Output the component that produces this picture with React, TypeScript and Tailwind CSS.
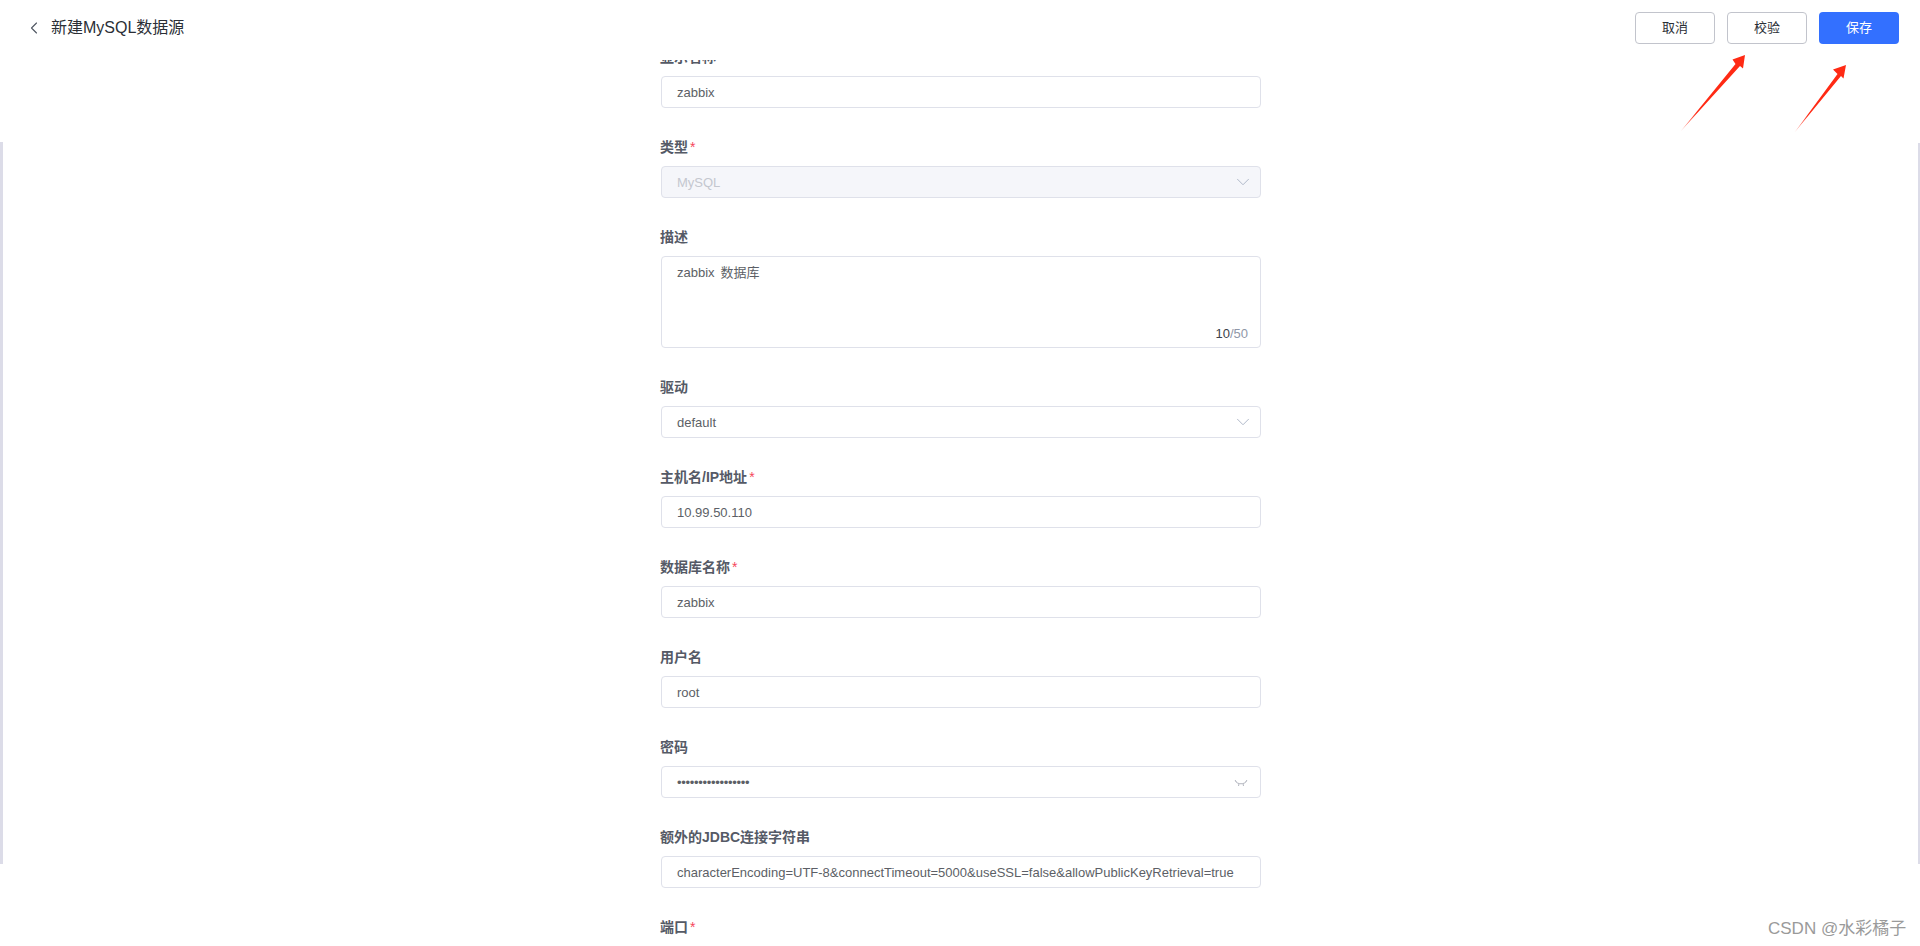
import React from 'react';
import { ChevronDown, ChevronLeft } from 'lucide-react';

const fontStack = "font-['Liberation_Sans','Noto_Sans_CJK_SC',sans-serif]";

function Label({ text, required }: { text: string; required?: boolean }) {
  return (
    <div className="mb-[10px] ml-[-1px] flex h-5 items-center pt-[2px] text-[14px] font-semibold leading-5 text-[#555a66]">
      {text}
      {required && <span className="ml-[2px] font-normal text-[#f5475b]">*</span>}
    </div>
  );
}

function Field({ label, required, value, disabled, suffix }: {
  label: string;
  required?: boolean;
  value: React.ReactNode;
  disabled?: boolean;
  suffix?: React.ReactNode;
}) {
  return (
    <div className="mb-[28px]">
      <Label text={label} required={required} />
      <div
        className={`flex h-8 items-center justify-between rounded border border-[#dfe1ea] pl-[15px] pr-[6px] text-[13px] ${
          disabled ? 'bg-[#f5f6fa] text-[#c4c7cf]' : 'bg-white text-[#5c5f66]'
        }`}
      >
        <span className="pt-[2px]">{value}</span>
        {suffix}
      </div>
    </div>
  );
}

function EyeClosed() {
  return (
    <svg width="14" height="8" viewBox="0 0 14 8" fill="none" stroke="#b4b7c0" strokeWidth="1" className="mr-[6px] mt-[2px]">
      <path d="M1.5 2.5C4 5.5 10 5.5 12.5 2.500" />
      <path d="M1 1l1.5 2M13 1l-1.500 2M5 4.500L4.500 7M9 4.500L9.500 7" />
    </svg>
  );
}

const select = <ChevronDown className="h-[22px] w-[22px] text-[#a9b2c4]" strokeWidth={1} />;

export default function App() {
  return (
    <div className={`relative flex h-[946px] flex-col overflow-hidden bg-white ${fontStack}`}>
      <header className="flex h-[60px] shrink-0 items-start justify-between pl-[24px] pr-[21px] pt-3">
        <div className="flex h-8 items-center text-[16px] text-[#2b2f36]">
          <ChevronLeft className="mr-[7px] h-5 w-5 text-[#4f5662]" strokeWidth={1.3} />
          新建MySQL数据源
        </div>
        <div className="flex gap-3 text-[13px]">
          <button className="h-8 w-20 rounded border border-[#c2c4cc] bg-white text-[#2b2f36]">取消</button>
          <button className="h-8 w-20 rounded border border-[#c2c4cc] bg-white text-[#2b2f36]">校验</button>
          <button className="h-8 w-20 rounded bg-[#3370ff] text-white">保存</button>
        </div>
      </header>

      <main className="min-h-0 flex-1 overflow-hidden">
        <form className="mx-auto mt-[-14px] w-[600px] translate-x-[1px]">
          <Field label="显示名称" value="zabbix" />
          <Field label="类型" required value="MySQL" disabled suffix={select} />

          <div className="mb-[28px]">
            <Label text="描述" />
            <div className="relative h-[92px] rounded border border-[#dfe1ea] pl-[15px] pr-[15px] pt-[6px] text-[13px] leading-5 text-[#5c5f66]">
              zabbix<span className="ml-[6px]">数据库</span>
              <span className="absolute bottom-[3px] right-[12px] text-[13px] text-[#8f97a8]">
                <span className="text-[#3a3f4a]">10</span>/50
              </span>
            </div>
          </div>

          <Field label="驱动" value="default" suffix={select} />
          <Field label="主机名/IP地址" required value="10.99.50.110" />
          <Field label="数据库名称" required value="zabbix" />
          <Field label="用户名" value="root" />
          <Field label="密码" value={<span className="tracking-[-0.3px]">•••••••••••••••••</span>} suffix={<EyeClosed />} />
          <Field label="额外的JDBC连接字符串" value="characterEncoding=UTF-8&connectTimeout=5000&useSSL=false&allowPublicKeyRetrieval=true" />
          <Label text="端口" required />
        </form>
      </main>

      {/* edges left over from the captured page */}
      <div className="absolute left-0 top-[142px] h-[722px] w-[3px] bg-[#dcdce8]" />
      <div className="absolute right-0 top-[143px] h-[721px] w-[2px] bg-[#dcdce8]" />

      {/* annotation arrows */}
      <svg className="absolute left-[1670px] top-[50px]" width="190" height="90" viewBox="1670 50 190 90">
        <defs>
          <linearGradient id="a1" x1="1681" y1="131" x2="1745" y2="55" gradientUnits="userSpaceOnUse">
            <stop offset="0" stopColor="#ff2a14" stopOpacity="0.4" />
            <stop offset="0.25" stopColor="#ff2a14" />
          </linearGradient>
          <linearGradient id="a2" x1="1795" y1="132" x2="1846" y2="65" gradientUnits="userSpaceOnUse">
            <stop offset="0" stopColor="#ff2a14" stopOpacity="0.4" />
            <stop offset="0.25" stopColor="#ff2a14" />
          </linearGradient>
        </defs>
        <path d="M1680.500 131.500L1735.500 64L1732.500 59.500L1745 55L1743 68.500L1740 66Z" fill="url(#a1)" />
        <path d="M1794.500 132.500L1837.500 74L1833 69.500L1846 65L1843.500 78.500L1841 76Z" fill="url(#a2)" />
      </svg>

      <div className="absolute left-[1768px] top-[919px] text-[17px] leading-5 text-[#9a9a9a]">CSDN @水彩橘子</div>
    </div>
  );
}
